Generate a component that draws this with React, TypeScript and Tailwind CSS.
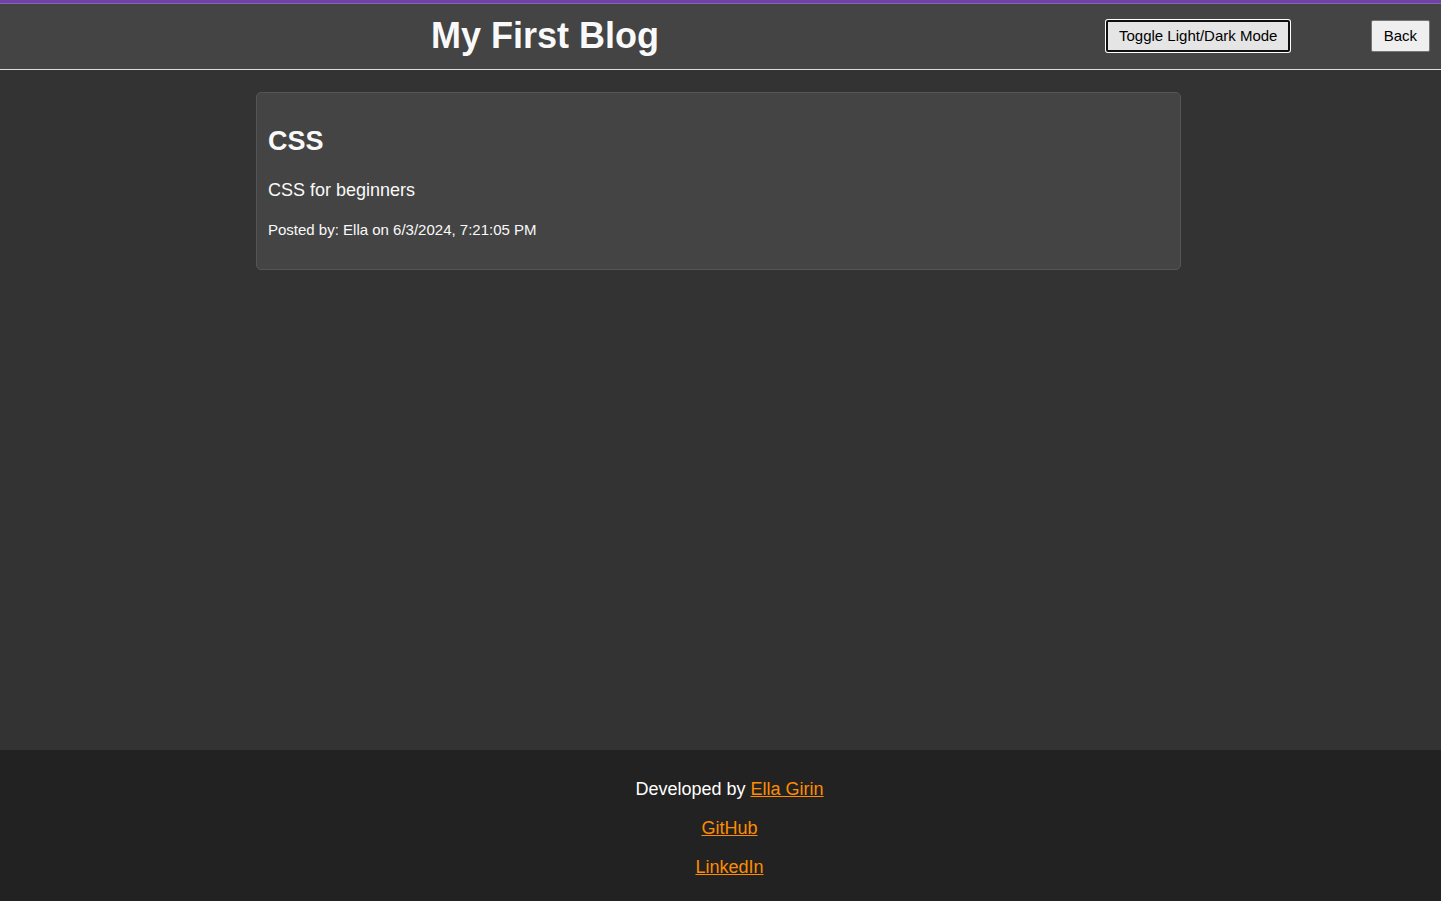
import { useState } from "react";

const posts = [
  { title: "CSS", content: "CSS for beginners", author: "Ella", date: "6/3/2024, 7:21:05 PM" },
];

export default function App() {
  const [dark, setDark] = useState(true);
  const page = dark ? "bg-[#333333] text-[#f9f9f9]" : "bg-white text-[#333333]";
  const panel = dark ? "bg-[#444444]" : "bg-[#f4f4f4]";
  const foot = dark ? "bg-[#222222] text-white" : "bg-[#eeeeee] text-[#333333]";
  const link = "text-[#ff8c00] underline";

  return (
    <div
      className={`flex min-h-screen flex-col border-t-3 border-t-[#6f42a5] font-['Liberation_Sans',Arial,sans-serif] text-lg leading-5 ${page}`}
    >
      <header
        className={`flex items-center border-t border-b border-t-[#8a64b4] border-b-[#dddddd] pt-4 pr-[11px] pb-[17px] ${panel}`}
      >
        <h1 className="flex-1 pr-4 text-center text-4xl leading-8 font-bold">My First Blog</h1>
        <div className="flex w-[324px] items-center justify-between">
          <button
            type="button"
            onClick={() => setDark(!dark)}
            className="h-8 rounded-xs border-2 border-[#101010] bg-[#e5e5e5] px-[11px] text-[15px] text-black ring-1 ring-white"
          >
            Toggle Light/Dark Mode
          </button>
          <button
            type="button"
            className="h-8 rounded-xs border border-[#767676] bg-[#efefef] px-3 text-[15px] text-black"
          >
            Back
          </button>
        </div>
      </header>

      <main className="flex-1 pt-[22px] pr-[260px] pb-6 pl-64">
        {posts.map((post) => (
          <article
            key={post.title}
            className={`rounded-[5px] border border-[#555555] px-[11px] pt-8 pb-[29px] ${panel}`}
          >
            <h2 className="text-[27px] leading-8 font-bold">{post.title}</h2>
            <p className="mt-[23px]">{post.content}</p>
            <p className="mt-5 text-[15px]">
              Posted by: {post.author} on {post.date}
            </p>
          </article>
        ))}
      </main>

      <footer className={`flex flex-col items-center gap-[19px] pt-[29px] pb-6 pl-[18px] ${foot}`}>
        <p>
          Developed by{" "}
          <a href="#ella" className={link}>
            Ella Girin
          </a>
        </p>
        <a href="#github" className={link}>
          GitHub
        </a>
        <a href="#linkedin" className={link}>
          LinkedIn
        </a>
      </footer>
    </div>
  );
}
